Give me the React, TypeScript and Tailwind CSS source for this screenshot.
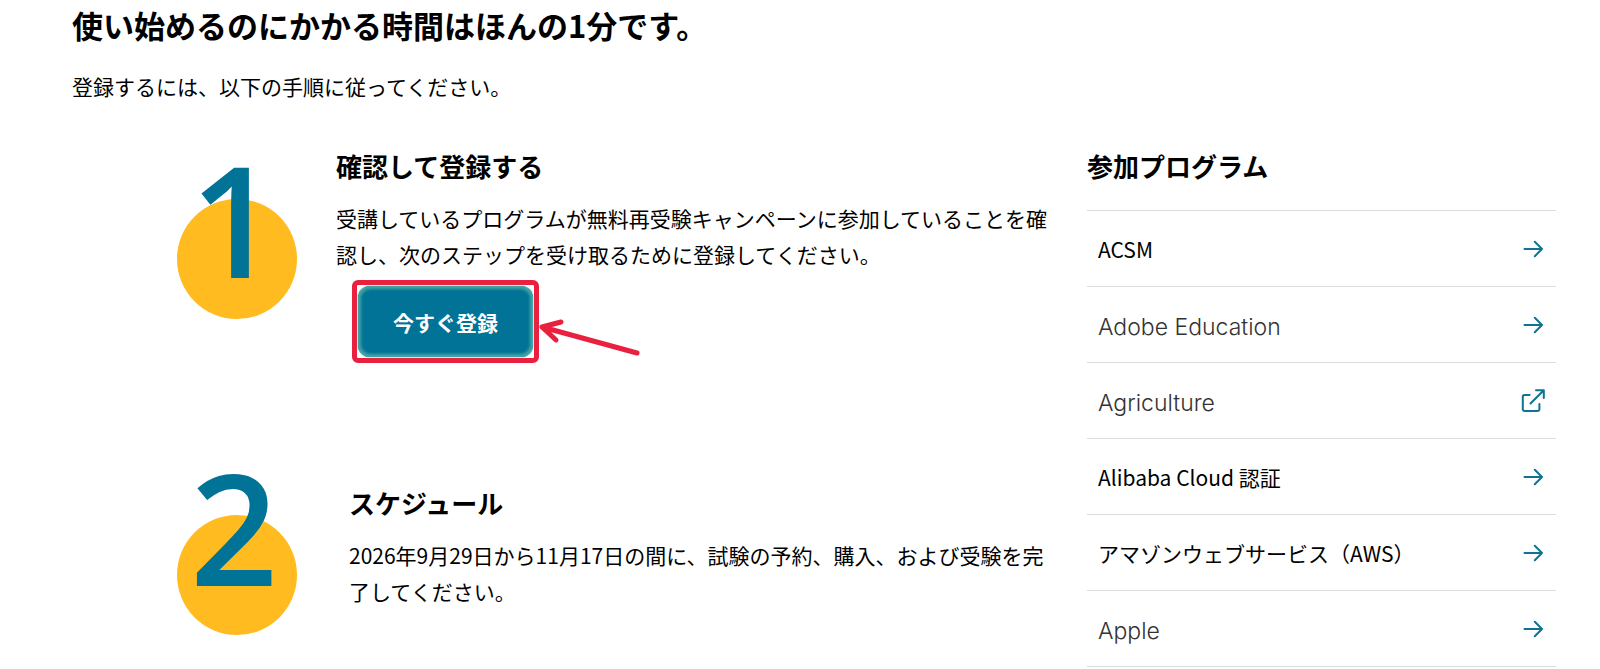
import React from 'react';

interface Program {
  name: string;
  localized?: boolean;
  external?: boolean;
}

const programs: Program[] = [
  { name: 'ACSM', localized: true },
  { name: 'Adobe Education' },
  { name: 'Agriculture', external: true },
  { name: 'Alibaba Cloud 認証', localized: true },
  { name: 'アマゾンウェブサービス（AWS）', localized: true },
  { name: 'Apple' },
];

const ArrowIcon = () => (
  <svg className="w-6 h-6" viewBox="0 0 24 24" fill="none" stroke="currentColor" strokeWidth="2" strokeLinecap="round" strokeLinejoin="round">
    <path d="M3.5 12h17.5M13.8 4.8L21 12l-7.2 7.2" />
  </svg>
);

const ExternalIcon = () => (
  <svg className="w-6 h-6" viewBox="0 0 24 24" fill="none" stroke="currentColor" strokeWidth="2" strokeLinecap="round" strokeLinejoin="round">
    <path d="M8.6 6H3.6a1.8 1.8 0 0 0-1.8 1.8v12.4A1.8 1.8 0 0 0 3.6 22h13a1.8 1.8 0 0 0 1.8-1.8V15" />
    <path d="M15 1.2h7.8V9M22.8 1.2L9.5 14.5" />
  </svg>
);

const StepNumber: React.FC<{ value: number; lift: string }> = ({ value, lift }) => (
  <div className="relative w-[120px] h-[120px] shrink-0 rounded-full bg-[#ffbb20]">
    <span className={`absolute inset-x-0 pr-1.5 text-center font-['Open_Sans',sans-serif] font-semibold text-[154px] leading-[154px] text-[#007396] ${lift}`}>
      {value}
    </span>
  </div>
);

const App: React.FC = () => {
  return (
    <main lang="ja" className="bg-white text-black pl-[72px] pr-11 pb-0.5 font-['Noto_Sans_CJK_JP',sans-serif]">
      <h1 className="text-[31px] leading-[50px] font-bold">使い始めるのにかかる時間はほんの1分です。</h1>
      <p className="mt-[18px] text-[21px] leading-9">登録するには、以下の手順に従ってください。</p>

      <div className="flex gap-8 mt-[42px]">
        <div className="flex-1 min-w-0 pl-[105px]">
          <section className="flex">
            <div className="pt-[53px]">
              <StepNumber value={1} lift="bottom-6" />
            </div>
            <div className="flex-1 ml-[39px]">
              <h2 className="text-[26px] leading-10 font-bold">確認して登録する</h2>
              <p className="mt-3.5 text-[21px] leading-9">
                受講しているプログラムが無料再受験キャンペーンに参加していることを確認し、次のステップを受け取るために登録してください。
              </p>
              <div className="relative w-fit ml-4 mt-2 border-[5px] border-[#e9213f] rounded-md">
                <button
                  type="button"
                  className="block m-px w-[175px] h-[71px] rounded-xl bg-[#007396] text-white text-[21px] leading-8 font-bold shadow-[inset_0_0_3px_3px_#43a6a5,0_0_2px_#43a6a5]"
                >
                  今すぐ登録
                </button>
                <svg className="absolute left-full top-8 w-[110px] h-12" viewBox="0 0 110 48" fill="none" stroke="#e9213f" strokeWidth="5" strokeLinecap="round" strokeLinejoin="round" aria-hidden="true">
                  <path d="M103 36L8 10M27 5L8 10l14 13" />
                </svg>
              </div>
            </div>
          </section>

          <section className="flex mt-[120px]">
            <div className="pt-8">
              <StepNumber value={2} lift="bottom-8" />
            </div>
            <div className="flex-1 ml-[52px]">
              <h2 className="text-[26px] leading-10 font-bold">スケジュール</h2>
              <p className="mt-3.5 text-[21px] leading-9">
                2026年9月29日から11月17日の間に、試験の予約、購入、および受験を完了してください。
              </p>
            </div>
          </section>
        </div>

        <aside className="w-[469px] shrink-0">
          <h2 className="text-[26px] leading-10 font-bold">参加プログラム</h2>
          <ul className="mt-6 border-t border-[#dcdcdc]">
            {programs.map((program) => (
              <li key={program.name} className="border-b border-[#dcdcdc]">
                <a href="#" className="flex items-center justify-between h-[75px] px-[11px]">
                  {program.localized ? (
                    <span className="text-[21px] leading-8">{program.name}</span>
                  ) : (
                    <span className="pt-1 font-['Inter',sans-serif] font-light text-[23px] leading-8 text-[#333333]">{program.name}</span>
                  )}
                  <span className="text-[#0f7391]">{program.external ? <ExternalIcon /> : <ArrowIcon />}</span>
                </a>
              </li>
            ))}
          </ul>
        </aside>
      </div>
    </main>
  );
};

export default App;
